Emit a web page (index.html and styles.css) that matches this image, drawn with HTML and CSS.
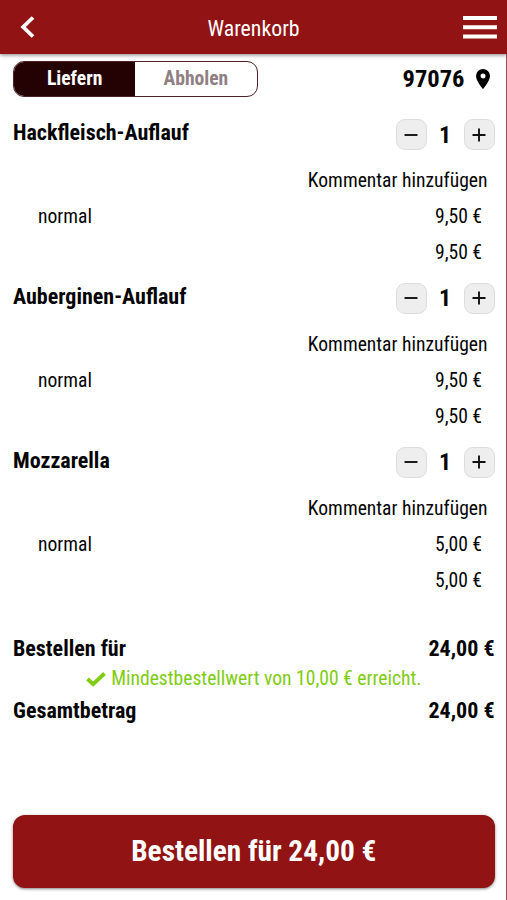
FILE: index.html
```html
<!DOCTYPE html>
<html lang="de">
<head>
    <meta charset="UTF-8">
    <meta name="viewport" content="width=device-width, initial-scale=1.0">
    <title>Warenkorb</title>
    <link rel="stylesheet" href="styles.css">
</head>
<body>
    <header class="header">
        <svg class="back" width="16" height="22" viewBox="0 0 16 22"><path d="M13 1.500 3.200 11 13 20.500" /></svg>
        <h1>Warenkorb</h1>
        <svg class="menu" width="34" height="23" viewBox="0 0 34 23"><path d="M0 2h34M0 11.200h34M0 20.400h34" /></svg>
    </header>

    <main class="container">
        <div class="top">
            <div class="toggle">
                <div class="option active">Liefern</div>
                <div class="option">Abholen</div>
            </div>
            <div class="location">
                <span>97076</span>
                <svg width="14" height="20" viewBox="0 0 14 20"><path fill-rule="evenodd" d="M7 0a7 7 0 0 0-7 7c0 5 7 13 7 13s7-8 7-13a7 7 0 0 0-7-7zm0 4.500a2.500 2.500 0 1 1 0 5 2.500 2.500 0 0 1 0-5z" /></svg>
            </div>
        </div>

        <div id="cart"></div>

        <section class="summary">
            <div class="total"><span>Bestellen für</span><span>24,00 €</span></div>
            <div class="minimum">
                <svg width="20" height="16" viewBox="0 0 20 16"><path d="M1.500 8 7.200 13.200 18.500 2.500" /></svg>
                <span>Mindestbestellwert von 10,00 € erreicht.</span>
            </div>
            <div class="total"><span>Gesamtbetrag</span><span>24,00 €</span></div>
        </section>

        <button class="order">Bestellen für 24,00 €</button>
    </main>

    <script>
        const items = [
            { name: 'Hackfleisch-Auflauf', price: '9,50 €' },
            { name: 'Auberginen-Auflauf', price: '9,50 €' },
            { name: 'Mozzarella', price: '5,00 €' }
        ];

        function displayCart() {
            const cart = document.getElementById('cart');
            cart.innerHTML = '';

            items.forEach(item => {
                const row = document.createElement('section');
                row.className = 'item';
                row.innerHTML = `
                    <div class="item-head">
                        <h2>${item.name}</h2>
                        <div class="quantity">
                            <button class="step"><svg width="14" height="14" viewBox="0 0 14 14"><path d="M.5 7h13" /></svg></button>
                            <span class="count">1</span>
                            <button class="step"><svg width="14" height="14" viewBox="0 0 14 14"><path d="M.5 7h13M7 .5v13" /></svg></button>
                        </div>
                    </div>
                    <div class="comment">Kommentar hinzufügen</div>
                    <div class="line"><span>normal</span><span>${item.price}</span></div>
                    <div class="line sum"><span>${item.price}</span></div>
                `;
                cart.appendChild(row);
            });
        }

        displayCart();
    </script>
</body>
</html>
```
FILE: styles.css
```css
* {
    box-sizing: border-box;
}
body {
    font-family: "Roboto Condensed", Roboto, sans-serif;
    font-stretch: 75%;
    margin: 0;
    height: 900px;
    display: flex;
    flex-direction: column;
    background-color: #fff;
    color: #050505;
    font-size: 19.6px;
    overflow: hidden;
}
h1, h2 {
    margin: 0;
}
svg {
    display: block;
    flex: none;
}
button {
    font-family: inherit;
    font-stretch: inherit;
    padding: 0;
    border: none;
    cursor: pointer;
}
.header {
    flex: none;
    height: 54px;
    padding: 0 10px 0 20px;
    display: grid;
    grid-template-columns: 34px 1fr 44px;
    align-items: center;
    background-color: #921313;
    color: #fff;
    box-shadow: 0 1px 4px rgba(0, 0, 0, 0.5);
}
.header h1 {
    font-size: 21.8px;
    font-weight: 450;
    text-align: center;
    padding-top: 3px;
}
.back {
    fill: none;
    stroke: #fff;
    stroke-width: 3.8;
}
.menu {
    justify-self: end;
    stroke: #fff;
    stroke-width: 4;
}
.container {
    flex: 1;
    display: flex;
    flex-direction: column;
    padding: 7px 11.5px 12.5px 13px;
    border-right: 1px solid #8f5054;
}
.top {
    display: flex;
    justify-content: space-between;
    height: 36px;
    margin-bottom: 22px;
}
.toggle {
    display: flex;
    width: 244.5px;
    border: 1px solid #4c2227;
    border-radius: 11px;
    overflow: hidden;
}
.option {
    flex: 1;
    display: flex;
    align-items: center;
    justify-content: center;
    padding-bottom: 1px;
    font-weight: 700;
    color: #8f8183;
}
.option.active {
    background-color: #240204;
    color: #fff;
}
.location {
    display: flex;
    align-items: center;
    gap: 11px;
    padding-right: 5px;
    padding-bottom: 1px;
    font-size: 24.5px;
    font-weight: 700;
}
.item {
    height: 163.8px;
}
.item-head {
    display: flex;
    justify-content: space-between;
    height: 31px;
}
.item h2 {
    font-size: 22px;
    line-height: 28px;
}
.quantity {
    display: flex;
    align-items: center;
}
.step {
    display: flex;
    align-items: center;
    justify-content: center;
    width: 31px;
    height: 31px;
    border: 1px solid #ddd;
    border-radius: 9px;
    background-color: #eee;
}
.step path {
    stroke: #111;
    stroke-width: 1.9;
}
.count {
    width: 37px;
    text-align: center;
    font-size: 24px;
    font-weight: 700;
}
.comment {
    height: 36px;
    padding-right: 7px;
    margin-top: 13px;
    line-height: 36px;
    text-align: right;
}
.line {
    display: flex;
    justify-content: space-between;
    height: 36px;
    padding: 0 12.5px 0 25px;
    line-height: 36px;
}
.line.sum {
    justify-content: flex-end;
}
.summary {
    margin-top: 22.6px;
}
.total {
    display: flex;
    justify-content: space-between;
    font-size: 22px;
    font-weight: 700;
    line-height: 32px;
}
.minimum {
    display: flex;
    align-items: center;
    justify-content: center;
    gap: 5px;
    height: 30px;
    padding-bottom: 2px;
    color: #80cc14;
}
.minimum path {
    fill: none;
    stroke: #80cc14;
    stroke-width: 3.8;
}
.order {
    margin-top: auto;
    height: 73px;
    border-radius: 12px;
    background-color: #921313;
    color: #fff;
    font-size: 29.3px;
    font-weight: 700;
    box-shadow: 0 1px 3px rgba(0, 0, 0, 0.5);
}
```
